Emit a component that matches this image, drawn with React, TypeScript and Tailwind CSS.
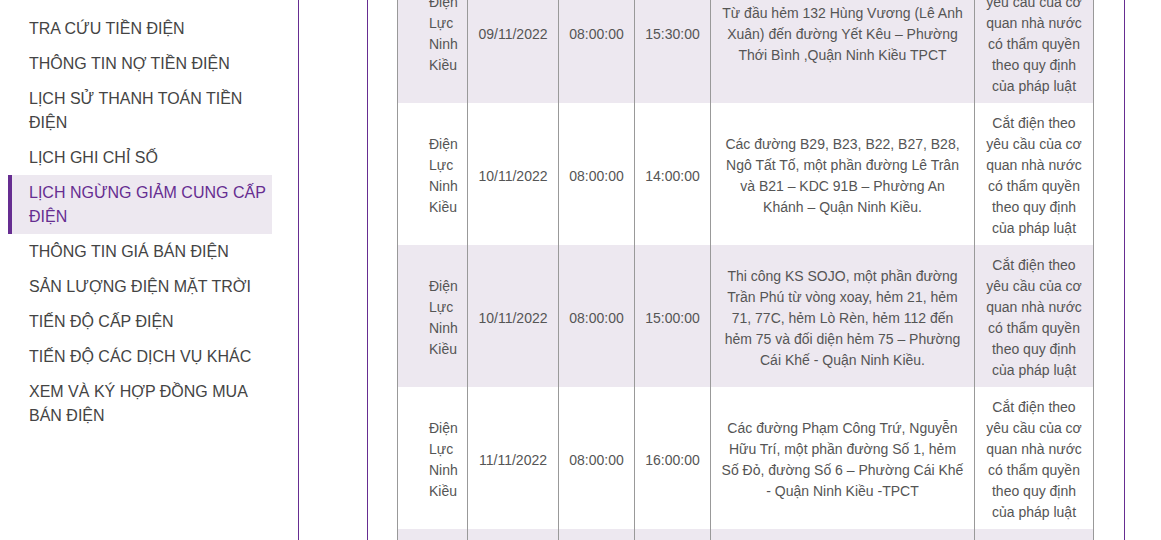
import React from 'react';

const menuItems = [
  'TRA CỨU TIỀN ĐIỆN',
  'THÔNG TIN NỢ TIỀN ĐIỆN',
  'LỊCH SỬ THANH TOÁN TIỀN ĐIỆN',
  'LỊCH GHI CHỈ SỐ',
  'LỊCH NGỪNG GIẢM CUNG CẤP ĐIỆN',
  'THÔNG TIN GIÁ BÁN ĐIỆN',
  'SẢN LƯỢNG ĐIỆN MẶT TRỜI',
  'TIẾN ĐỘ CẤP ĐIỆN',
  'TIẾN ĐỘ CÁC DỊCH VỤ KHÁC',
  'XEM VÀ KÝ HỢP ĐỒNG MUA BÁN ĐIỆN',
];

const ACTIVE = 4;

const reason = 'Cắt điện theo yêu cầu của cơ quan nhà nước có thẩm quyền theo quy định của pháp luật';

const rows = [
  {
    date: '09/11/2022',
    from: '08:00:00',
    to: '15:30:00',
    area: 'Từ đầu hẻm 132 Hùng Vương (Lê Anh Xuân) đến đường Yết Kêu – Phường Thới Bình ,Quận Ninh Kiều TPCT',
  },
  {
    date: '10/11/2022',
    from: '08:00:00',
    to: '14:00:00',
    area: 'Các đường B29, B23, B22, B27, B28, Ngô Tất Tố, một phần đường Lê Trân và B21 – KDC 91B – Phường An Khánh – Quận Ninh Kiều.',
  },
  {
    date: '10/11/2022',
    from: '08:00:00',
    to: '15:00:00',
    area: 'Thi công KS SOJO, một phần đường Trần Phú từ vòng xoay, hẻm 21, hẻm 71, 77C, hẻm Lò Rèn, hẻm 112 đến hẻm 75 và đối diện hẻm 75 – Phường Cái Khế - Quận Ninh Kiều.',
  },
  {
    date: '11/11/2022',
    from: '08:00:00',
    to: '16:00:00',
    area: 'Các đường Phạm Công Trứ, Nguyễn Hữu Trí, một phần đường Số 1, hẻm Số Đỏ, đường Số 6 – Phường Cái Khế - Quận Ninh Kiều -TPCT',
  },
  {
    date: '12/11/2022',
    from: '07:30:00',
    to: '16:30:00',
    area: 'Một phần đường Mậu Thân, hẻm 51 và hẻm 73 – Phường An Hòa – Quận Ninh Kiều -TPCT',
  },
];

export default function App() {
  return (
    <div className="flex h-[540px] overflow-hidden bg-white font-['Liberation_Sans',Arial,sans-serif]">
      {/* Sidebar menu */}
      <aside className="w-[299px] shrink-0 border-r border-[#662d91] pt-[10.5px]">
        <ul className="ml-2 w-[264px]">
          {menuItems.map((item, i) => (
            <li
              key={item}
              className={
                i === ACTIVE
                  ? 'border-l-4 border-[#662d91] bg-[#ede8f0] pt-[6.5px] pb-[4.5px] pl-[17px] pr-1 text-[16px] leading-6 text-[#662d91]'
                  : 'border-l-4 border-transparent pt-[6.5px] pb-[4.5px] pl-[17px] pr-1 text-[16px] leading-6 text-[#444]'
              }
            >
              {item}
            </li>
          ))}
        </ul>
      </aside>

      {/* Content box */}
      <main className="ml-[68px] w-[758px] shrink-0 border-x border-[#662d91] pl-[29px]">
        <table className="-mt-[39px] w-[697px] table-fixed border-collapse border-x border-[#999] text-[14px] leading-[21px] text-[#555]">
          <colgroup>
            <col className="w-[70px]" />
            <col className="w-[91px]" />
            <col className="w-[76px]" />
            <col className="w-[76px]" />
            <col className="w-[264px]" />
            <col className="w-[119px]" />
          </colgroup>
          <tbody>
            {rows.map((r, i) => (
              <tr key={i} className={i % 2 === 0 ? 'bg-[#ede8f0]' : 'bg-white'}>
                <td className="border-x border-[#999] pt-[10px] pb-[6px] pl-[31px] pr-2 text-left align-middle">
                  Điện Lực Ninh Kiều
                </td>
                <td className="border-x border-[#999] px-2 pt-[10px] pb-[6px] text-center align-middle">{r.date}</td>
                <td className="border-x border-[#999] px-2 pt-[10px] pb-[6px] text-center align-middle">{r.from}</td>
                <td className="border-x border-[#999] px-2 pt-[10px] pb-[6px] text-center align-middle">{r.to}</td>
                <td className="border-x border-[#999] px-2 pt-[10px] pb-[6px] text-center align-middle">{r.area}</td>
                <td className="border-x border-[#999] px-2 pt-[10px] pb-[6px] text-center align-middle">{reason}</td>
              </tr>
            ))}
          </tbody>
        </table>
      </main>
    </div>
  );
}
